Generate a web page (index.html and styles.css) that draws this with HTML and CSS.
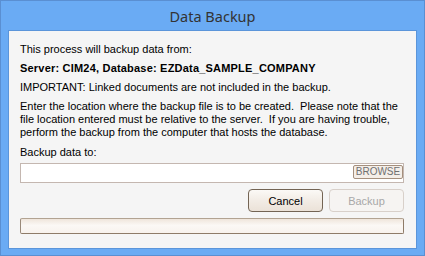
FILE: index.html
```html
<!DOCTYPE html>
<html>
<head>
<meta charset="utf-8">
<link rel="stylesheet" href="styles.css">
</head>
<body>
<div class="window">
  <div class="titlebar">Data Backup</div>
  <div class="panel">
    <p class="line">This process will backup data from:</p>
    <p class="line bold">Server: CIM24, Database: EZData_SAMPLE_COMPANY</p>
    <p class="line">IMPORTANT: Linked documents are not included in the backup.</p>
    <p class="line para">Enter the location where the backup file is to be created.&nbsp; Please note that the<br>file location entered must be relative to the server.&nbsp; If you are having trouble,<br>perform the backup from the computer that hosts the database.</p>
    <p class="line label">Backup data to:</p>
    <div class="input">
      <span class="browse">BROWSE</span>
    </div>
    <div class="buttons">
      <button class="btn">Cancel</button>
      <button class="btn disabled">Backup</button>
    </div>
    <div class="progress"></div>
  </div>
</div>
</body>
</html>
```
FILE: styles.css
```css
html, body {
  margin: 0;
  padding: 0;
  background: #6aabf4;
}
.window {
  width: 425px;
  height: 256px;
  box-sizing: border-box;
  border: 1px solid #5a8fd2;
  background: #6aabf4;
  padding: 0 7px 6px 7px;
  display: flex;
  flex-direction: column;
}
.titlebar {
  height: 29px;
  display: flex;
  align-items: center;
  justify-content: center;
  font-family: "Noto Sans", sans-serif;
  font-size: 14.5px;
  color: #333333;
}
.panel {
  flex: 1;
  background: #f5f5f5;
  border: 1px solid #5b95da;
  padding: 12px 12px 0 11px;
  display: flex;
  flex-direction: column;
  font-family: "Liberation Sans", sans-serif;
  font-size: 11px;
  color: #000;
}
.line {
  margin: 0 0 6px 0;
  line-height: 13px;
}
.bold {
  font-weight: bold;
  letter-spacing: 0.2px;
}
.para {
  margin-bottom: 7px;
}
.label {
  margin-bottom: 4px;
}
.input {
  height: 20px;
  box-sizing: border-box;
  border: 1px solid #c4b7b0;
  background: #ffffff;
  display: flex;
  justify-content: flex-end;
  align-items: flex-start;
  padding: 1px 0 0 0;
}
.browse {
  height: 14px;
  width: 50px;
  box-sizing: border-box;
  border: 1px solid #a48f7d;
  border-radius: 2px;
  background: #f4eee8;
  color: #707070;
  font-size: 10px;
  line-height: 12px;
  text-align: center;
}
.buttons {
  display: flex;
  justify-content: flex-end;
  gap: 6px;
  margin-top: 6px;
}
.btn {
  width: 75px;
  height: 23px;
  box-sizing: border-box;
  border: 1px solid #736454;
  border-radius: 4px;
  background: linear-gradient(#fbf9f6, #f2ece5 50%, #ebe2d8);
  font-family: "Liberation Sans", sans-serif;
  font-size: 11px;
  color: #000;
  padding: 0;
}
.btn.disabled {
  border-color: #d8d0ca;
  background: #f6f4f2;
  color: #a8a8a8;
}
.progress {
  margin-top: 6px;
  height: 16px;
  box-sizing: border-box;
  border: 1px solid #8e7b68;
  border-top-color: #b2a392;
  border-left-color: #9a8a7a;
  border-radius: 2px;
  background: linear-gradient(#efe5db, #fbf8f5 45%, #f7f2ed);
}
```
